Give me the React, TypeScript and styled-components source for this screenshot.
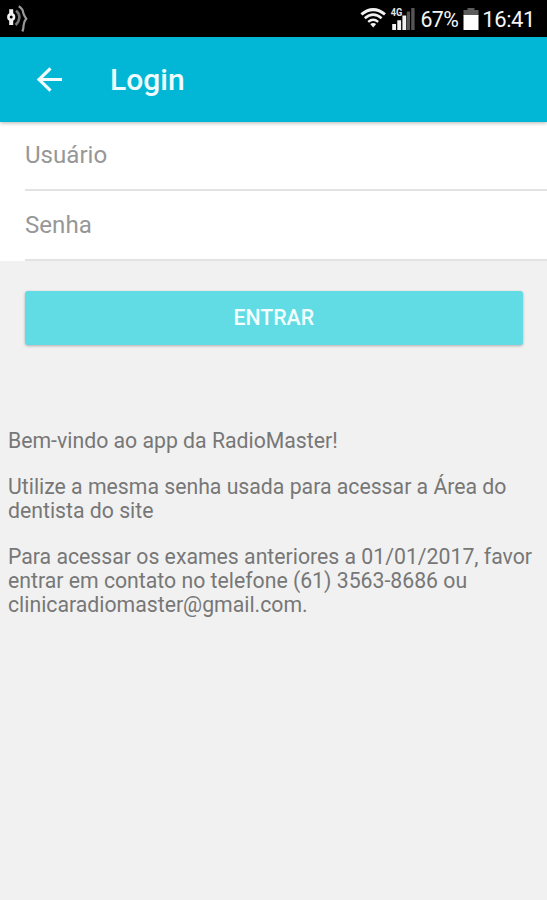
import React from 'react';
import styled, { createGlobalStyle } from 'styled-components';

const GlobalStyle = createGlobalStyle`
  * { box-sizing: border-box; }
  body { margin: 0; background: #f1f1f1; font-family: Roboto, sans-serif; }
`;

const Screen = styled.div`
  display: flex;
  flex-direction: column;
  height: 900px;
  overflow: hidden;
  background: #f1f1f1;
`;

const StatusBar = styled.header`
  display: flex;
  justify-content: space-between;
  flex: 0 0 37px;
  padding: 0 12px 0 4px;
  background: #000;
`;

const StatusGroup = styled.div`
  display: flex;
  height: 37px;
  svg { display: block; flex: none; }
`;

const StatusIcon = styled.div<{ $gap: number }>`
  margin-left: ${(p) => p.$gap}px;
`;

const StatusText = styled.span<{ $size: number; $gap: number; $spacing: number }>`
  margin-left: ${(p) => p.$gap}px;
  font-size: ${(p) => p.$size}px;
  line-height: 39px;
  letter-spacing: ${(p) => p.$spacing}px;
  color: #f4f4f4;
  white-space: nowrap;
`;

const AppBar = styled.div`
  display: flex;
  align-items: center;
  flex: 0 0 85px;
  padding-left: 35px;
  background: #02b7d5;
  box-shadow: 0 1px 4px rgba(0, 0, 0, 0.3);
  z-index: 1;
`;

const BackButton = styled.button`
  display: flex;
  padding: 0 0 2px;
  border: 0;
  background: none;
`;

const Title = styled.h1`
  margin: 0 0 0 46px;
  font-size: 30px;
  font-weight: 500;
  line-height: 36px;
  color: #effcff;
`;

const Form = styled.form`
  display: flex;
  flex-direction: column;
`;

const Fields = styled.div`
  padding-left: 25px;
  background: #fff;
`;

const Field = styled.input<{ $height: number; $lift: number }>`
  display: block;
  width: 100%;
  height: ${(p) => p.$height}px;
  padding: 0 0 ${(p) => p.$lift}px;
  border: 0;
  border-bottom: 2px solid #e2e2e2;
  border-radius: 0;
  outline: 0;
  background: transparent;
  font: 400 24.1px Roboto, sans-serif;
  &::placeholder { color: #979797; opacity: 1; }
`;

const SubmitButton = styled.button`
  height: 54px;
  margin: 30px 24.5px 0 25px;
  padding: 0 0 2px;
  border: 0;
  border-radius: 3px;
  background: #61dbe4;
  box-shadow: 0 1px 3px rgba(0, 0, 0, 0.28);
  font: 500 21.3px Roboto, sans-serif;
  color: #f3feff;
`;

const Welcome = styled.section`
  margin-top: 84px;
  padding-left: 8px;
  font-size: 21.24px;
  line-height: 24.3px;
  color: #777;
`;

const Paragraph = styled.p`
  margin: 0 0 21.4px;
  white-space: nowrap;
`;

const BeamIcon = () => (
  <svg width="24" height="37" viewBox="4 0 24 37" fill="none">
    <path d="M11.2 9.2v5M11.2 20v5" stroke="#f2f2f2" strokeWidth="4" />
    <circle cx="11.2" cy="17" r="2.8" stroke="#f2f2f2" strokeWidth="2.6" />
    <path d="M16 10.8q3.4 2.6 3.4 6.2-.2 4.6-3.8 8" stroke="#777" strokeWidth="2.6" />
    <path d="M18.8 6.2q4.4 2.8 4.4 6.6 1 3.2 3 5.9-2.4 2.8-2.6 6.5 0 3-1.2 6.3" stroke="#999" strokeWidth="2.2" />
  </svg>
);

const WifiIcon = () => (
  <svg width="26" height="37" viewBox="361 0 26 37" fill="none" stroke="#f2f2f2">
    <path d="M362.4 14.4q11.8-9.6 23.6 0" strokeWidth="3" />
    <path d="M365.8 18.2q8.4-7 16.8 0" strokeWidth="2.6" />
    <path d="M369.2 21.8q5-4.2 10 0" strokeWidth="2.3" />
    <path d="M371.2 24q3-2.2 6 0l-3 3.6z" fill="#f2f2f2" stroke="none" />
  </svg>
);

const SignalIcon = () => (
  <svg width="26" height="37" viewBox="391 0 26 37">
    <path d="M393.2 24h3.8v6h-3.8zM398.3 20.2h3.8V30h-3.8zM403.4 15.5h3.8V30h-3.8z" fill="#f2f2f2" />
    <path d="M407.8 11.5h3.2V30h-3.2zM412.2 8h3.4v22h-3.4z" fill="#555" />
    <text x="391.8" y="16" fontSize="10" fontWeight="700" fontFamily="Roboto, sans-serif" fill="#e6e6e6" textLength="11.6" lengthAdjust="spacingAndGlyphs">4G</text>
  </svg>
);

const BatteryIcon = () => (
  <svg width="16" height="37" viewBox="464 0 16 37">
    <path d="M468.5 8h7v2h4v6h-15v-6h4z" fill="#5c5c5c" />
    <path d="M464.5 15h15v15h-15z" fill="#fff" />
  </svg>
);

const BackIcon = () => (
  <svg width="29" height="30" viewBox="35 64 29 30" fill="none" stroke="#f1fcff" strokeWidth="3.2">
    <path d="M50.5 68.3 39 79.5l11.5 11.2M39 79.5h23" />
  </svg>
);

export default function App() {
  return (
    <>
      <GlobalStyle />
      <Screen>
        <StatusBar>
          <StatusGroup><BeamIcon /></StatusGroup>
          <StatusGroup>
            <StatusIcon $gap={0}><WifiIcon /></StatusIcon>
            <StatusIcon $gap={4}><SignalIcon /></StatusIcon>
            <StatusText $size={21.3} $gap={4} $spacing={-0.6}>67%</StatusText>
            <StatusIcon $gap={5}><BatteryIcon /></StatusIcon>
            <StatusText $size={22} $gap={3} $spacing={-0.4}>16:41</StatusText>
          </StatusGroup>
        </StatusBar>
        <AppBar>
          <BackButton aria-label="Voltar"><BackIcon /></BackButton>
          <Title>Login</Title>
        </AppBar>
        <Form onSubmit={(e) => e.preventDefault()}>
          <Fields>
            <Field $height={69} $lift={1} placeholder="Usuário" aria-label="Usuário" />
            <Field $height={70} $lift={0} type="password" placeholder="Senha" aria-label="Senha" />
          </Fields>
          <SubmitButton type="submit">ENTRAR</SubmitButton>
        </Form>
        <Welcome>
          <Paragraph>Bem-vindo ao app da RadioMaster!</Paragraph>
          <Paragraph>Utilize a mesma senha usada para acessar a Área do<br />dentista do site</Paragraph>
          <Paragraph>Para acessar os exames anteriores a 01/01/2017, favor<br />entrar em contato no telefone (61) 3563-8686 ou<br />clinicaradiomaster@gmail.com.</Paragraph>
        </Welcome>
      </Screen>
    </>
  );
}
